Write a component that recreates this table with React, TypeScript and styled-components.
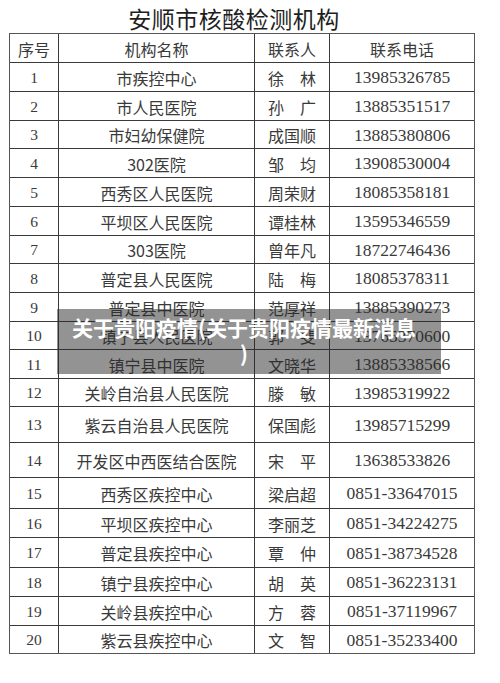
import * as React from "react";
import styled, { createGlobalStyle } from "styled-components";

interface rowType {
  no: string;
  org: string;
  person: string;
  phone: string;
  h: number;
}

const GlobalStyle = createGlobalStyle`
  body {
    margin: 0;
    background: #ffffff;
    font-family: "Liberation Serif", "Noto Sans CJK SC", serif;
  }
`;

const Page = styled.div`
  position: relative;
  width: 500px;
  height: 683px;
  background: #ffffff;
`;

const Title = styled.h1`
  margin: 0;
  height: 33px;
  width: 466px;
  margin-left: 9px;
  padding-right: 16px;
  box-sizing: border-box;
  text-align: center;
  font-family: "Noto Sans CJK SC", sans-serif;
  font-weight: 400;
  font-size: 23px;
  line-height: 36px;
  letter-spacing: 0.5px;
  color: #1e1e1e;
`;

const Table = styled.div`
  margin-left: 9px;
  width: 466px;
  border: 1px solid #555;
  box-sizing: border-box;
`;

const Row = styled.div<{ $h: number; $first?: boolean }>`
  display: grid;
  grid-template-columns: 48px 196px 75px 1fr;
  height: ${(p) => p.$h}px;
  box-sizing: border-box;
  border-top: ${(p) => (p.$first ? "none" : "1px solid #3a3a3a")};
`;

const Cell = styled.div<{ $kind?: "no" | "cjk" | "phone" }>`
  display: flex;
  align-items: center;
  justify-content: center;
  box-sizing: border-box;
  border-left: 1px solid #3a3a3a;
  color: #3a3a3a;
  white-space: nowrap;
  font-family: ${(p) =>
    p.$kind === "cjk"
      ? `"Noto Sans CJK SC", sans-serif`
      : `"Liberation Serif", "Noto Sans CJK SC", serif`};
  font-size: ${(p) => (p.$kind === "cjk" ? "16px" : p.$kind === "no" ? "15.5px" : "17.5px")};
  padding-top: 1px;
  &:first-child {
    border-left: none;
  }
`;

const Overlay = styled.div`
  position: absolute;
  left: 57px;
  top: 309px;
  width: 384px;
  height: 65px;
  box-sizing: border-box;
  padding: 5px 18px 0 8px;
  background: rgba(40, 40, 40, 0.5);
  color: #ffffff;
  text-align: center;
  font-family: "Noto Sans CJK SC", sans-serif;
  font-weight: 700;
  font-size: 21px;
  line-height: 26px;
`;

const rows: rowType[] = [
  { no: "1", org: "市疾控中心", person: "徐　林", phone: "13985326785", h: 29 },
  { no: "2", org: "市人民医院", person: "孙　广", phone: "13885351517", h: 29 },
  { no: "3", org: "市妇幼保健院", person: "成国顺", phone: "13885380806", h: 28 },
  { no: "4", org: "302医院", person: "邹　均", phone: "13908530004", h: 29 },
  { no: "5", org: "西秀区人民医院", person: "周荣财", phone: "18085358181", h: 29 },
  { no: "6", org: "平坝区人民医院", person: "谭桂林", phone: "13595346559", h: 29 },
  { no: "7", org: "303医院", person: "曾年凡", phone: "18722746436", h: 28 },
  { no: "8", org: "普定县人民医院", person: "陆　梅", phone: "18085378311", h: 29 },
  { no: "9", org: "普定县中医院", person: "范厚祥", phone: "13885390273", h: 29 },
  { no: "10", org: "镇宁县人民医院", person: "郭　斐", phone: "13765370600", h: 28 },
  { no: "11", org: "镇宁县中医院", person: "文晓华", phone: "13885338566", h: 29 },
  { no: "12", org: "关岭自治县人民医院", person: "滕　敏", phone: "13985319922", h: 28 },
  { no: "13", org: "紫云自治县人民医院", person: "保国彪", phone: "13985715299", h: 36 },
  { no: "14", org: "开发区中西医结合医院", person: "宋　平", phone: "13638533826", h: 35 },
  { no: "15", org: "西秀区疾控中心", person: "梁启超", phone: "0851-33647015", h: 31 },
  { no: "16", org: "平坝区疾控中心", person: "李丽芝", phone: "0851-34224275", h: 29 },
  { no: "17", org: "普定县疾控中心", person: "覃　仲", phone: "0851-38734528", h: 30 },
  { no: "18", org: "镇宁县疾控中心", person: "胡　英", phone: "0851-36223131", h: 29 },
  { no: "19", org: "关岭县疾控中心", person: "方　蓉", phone: "0851-37119967", h: 29 },
  { no: "20", org: "紫云县疾控中心", person: "文　智", phone: "0851-35233400", h: 28 },
];

function App() {
  return (
    <Page>
      <GlobalStyle />
      <Title>安顺市核酸检测机构</Title>
      <Table>
        <Row $h={28} $first>
          <Cell $kind="cjk">序号</Cell>
          <Cell $kind="cjk">机构名称</Cell>
          <Cell $kind="cjk">联系人</Cell>
          <Cell $kind="cjk">联系电话</Cell>
        </Row>
        {rows.map((row) => (
          <Row $h={row.h} key={row.no}>
            <Cell $kind="no">{row.no}</Cell>
            <Cell $kind="cjk">{row.org}</Cell>
            <Cell $kind="cjk">{row.person}</Cell>
            <Cell $kind="phone">{row.phone}</Cell>
          </Row>
        ))}
      </Table>
      <Overlay>
        关于贵阳疫情(关于贵阳疫情最新消息
        <br />)
      </Overlay>
    </Page>
  );
}

export default App;
